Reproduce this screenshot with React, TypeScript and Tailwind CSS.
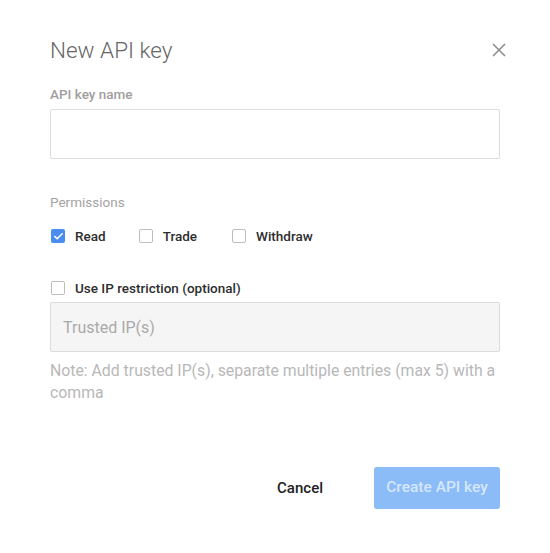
import { Check } from "lucide-react";

function Box({ checked }: { checked?: boolean }) {
  if (checked) {
    return (
      <span className="flex h-[14px] w-[14px] items-center justify-center rounded-[2px] bg-[#4a8df0]">
        <Check size={11} strokeWidth={3.5} className="text-white" />
      </span>
    );
  }
  return <span className="h-[14px] w-[14px] rounded-[2px] border-[1.5px] border-[#bdbdbd] bg-white" />;
}

function Option({ label, checked, className }: { label: string; checked?: boolean; className?: string }) {
  return (
    <label className={`flex h-5 items-center gap-[10px] pl-px text-[13.5px] font-medium text-[#2e2e2e] ${className ?? ""}`}>
      <Box checked={checked} />
      {label}
    </label>
  );
}

export default function App() {
  return (
    <div className="min-h-[553px] w-[550px] bg-white px-[50px] pt-9 font-['Roboto',sans-serif]">
      <div className="flex items-center justify-between">
        <h2 className="text-[22.5px] font-light leading-[28px] text-[#666]">New API key</h2>
        <button className="-mr-[6px] text-[#8a8a8a]" aria-label="close">
          <svg width="14" height="14" viewBox="0 0 14 14" stroke="currentColor" strokeWidth="1.5">
            <path d="M1 1L13 13M13 1L1 13" />
          </svg>
        </button>
      </div>

      <p className="mt-[22px] text-[13.5px] font-medium leading-4 text-[#9e9e9e]">API key name</p>
      <input className="mt-[7px] h-[50px] w-full rounded-[2px] border border-[#dcdcdc] px-3 outline-none" />

      <p className="mt-[35px] text-[13.5px] leading-4 text-[#a3a3a3]">Permissions</p>
      <div className="mt-4 flex">
        <Option label="Read" checked className="mr-8" />
        <Option label="Trade" className="mr-[34px]" />
        <Option label="Withdraw" />
      </div>

      <div className="mt-8">
        <Option label="Use IP restriction (optional)" />
      </div>
      <input
        disabled
        placeholder="Trusted IP(s)"
        className="mt-1 h-[50px] w-full rounded-[2px] border border-[#dcdcdc] bg-[#f5f5f5] px-[12px] text-[16px] placeholder:text-[#aaa]"
      />
      <p className="mt-2 text-[15.8px] leading-[22px] text-[#b8b8b8]">
        Note: Add trusted IP(s), separate multiple entries (max 5) with a comma
      </p>

      <div className="mt-[63px] flex items-center justify-end gap-[51px]">
        <button className="text-[15px] font-medium text-[#222]">Cancel</button>
        <button className="h-[42px] w-[126px] rounded-[3px] bg-[#8bbcf7] text-[15.5px] font-medium text-[#d6e7fc]">
          Create API key
        </button>
      </div>
    </div>
  );
}
